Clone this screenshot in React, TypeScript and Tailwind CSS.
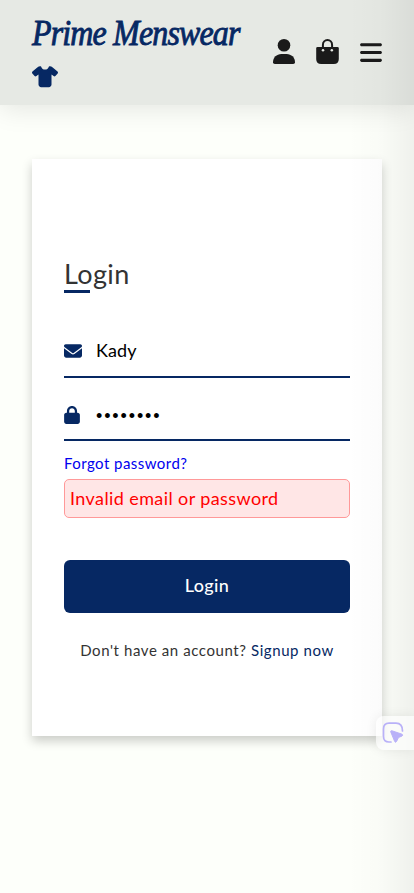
import React from "react";
import { FaBars, FaShirt, FaEnvelope, FaLock } from "react-icons/fa6";

function UserIcon() {
  return (
    <svg viewBox="0 0 22 25" className="h-[25px] w-[22px]" fill="currentColor">
      <circle cx="11" cy="6.3" r="6.3" />
      <path d="M0 23.2C0 18.6 3.7 15 8.3 15H13.7C18.3 15 22 18.6 22 23.2Q22 25 20.2 25H1.8Q0 25 0 23.2Z" />
    </svg>
  );
}

function BagIcon() {
  return (
    <svg viewBox="0 0 23 25" className="h-[25px] w-[23px]" fill="none">
      <path d="M6.9 10V5.9C6.9 3 8.9 1.1 11.5 1.1S16.1 3 16.1 5.9V10" stroke="currentColor" strokeWidth="2" />
      <path d="M1.5 8H21.5Q22.8 8 22.8 9.4V20Q22.8 25 17.8 25H5.2Q0.2 25 0.2 20V9.4Q0.2 8 1.5 8Z" fill="currentColor" />
      <circle cx="7" cy="11.3" r="1.25" fill="#e6e9e4" />
      <circle cx="15.8" cy="11.3" r="1.25" fill="#e6e9e4" />
    </svg>
  );
}

function Header() {
  return (
    <header className="flex h-[105px] items-center justify-between bg-[#e6e9e4] px-8 shadow-[0_4px_25px_rgba(0,0,0,0.1)]">
      <a className="block w-[215px] text-[#062863]">
        <span className="block h-[50px] origin-left scale-y-115 font-['Liberation_Serif',serif] text-[32px] leading-[41px] italic tracking-[-0.85px] whitespace-nowrap [-webkit-text-stroke:0.8px_#062863]">
          Prime Menswear
        </span>
        <FaShirt className="mt-[3px] mb-[4px] h-[21.5px] w-[26px]" />
      </a>
      <nav className="-mt-[2px] flex items-center gap-[21px] text-[#1a1a1a]">
        <UserIcon />
        <BagIcon />
        <FaBars className="mt-[2px] h-[25px] w-[22px]" />
      </nav>
    </header>
  );
}

function LoginCard() {
  return (
    <form className="mx-8 mt-[54px] h-[577px] bg-white px-8 pt-[97px] shadow-[0_5px_10px_rgba(0,0,0,0.2)]">
      <h1 className="h-[34px] text-[27px] leading-[36px] tracking-[0.4px] text-[#333]">Login</h1>
      <div className="h-[3px] w-[26px] bg-[#062863]" />
      <div className="mt-[33px] flex h-[52px] items-center gap-[14px] border-b-2 border-[#062863] text-[18px]">
        <FaEnvelope className="size-[18px] text-[#062863]" />
        <span className="-mt-[2px] tracking-[0.1px] text-black">Kady</span>
      </div>
      <div className="mt-[11px] flex h-[52px] items-center gap-[16px] border-b-2 border-[#062863]">
        <FaLock className="mt-[2px] h-[18px] w-4 text-[#062863]" />
        <span className="mt-[4px] font-['Liberation_Sans',sans-serif] text-[18px] tracking-[1.88px] text-black">••••••••</span>
      </div>
      <a className="mt-[11px] block h-[27px] text-[15px] leading-[22px] tracking-[0.45px] text-[#0000ee]">Forgot password?</a>
      <div className="h-[39px] rounded-[5px] border border-[#ff9999] bg-[#ffe6e6] px-[5px] text-[18px] leading-[36px] tracking-[0.4px] text-[#ff0000]">
        Invalid email or password
      </div>
      <button type="button" className="mt-[42px] block h-[53px] w-full rounded-[6px] bg-[#062863] pb-[2px] text-[18px] font-medium tracking-[0.4px] text-white">
        Login
      </button>
      <p className="mt-[25px] text-center text-[15px] leading-6 tracking-[0.58px] whitespace-nowrap text-[#333]">
        Don't have an account? <a className="text-[#062863]">Signup now</a>
      </p>
    </form>
  );
}

export default function App() {
  return (
    <div className="relative h-[893px] w-full overflow-hidden bg-[#fdfffa] font-['Lato',sans-serif]">
      <Header />
      <LoginCard />
      <div className="pointer-events-none absolute inset-y-0 right-0 w-[66px] bg-linear-to-r from-transparent via-black/[0.015] to-black/[0.055]" />
      <div className="absolute top-[716px] right-0 flex h-[34px] w-[38px] items-center rounded-l-[8px] bg-white/60 pl-[6px] shadow-[0_0_12px_rgba(0,0,0,0.07)]">
        <svg viewBox="0 0 22 22" className="size-[22px]" fill="none">
          <path d="M9 20H7Q1.5 20 1.5 14.5V7Q1.5 1.2 7 1.2H14Q20.5 1.2 20.5 9" stroke="#b9b1f8" strokeWidth="1.7" strokeLinecap="round" />
          <path d="M9.7 8.7 20 12.2Q21.5 13 20 14L16.5 15.5 14.5 19.5Q13.5 21 12.7 19.5L8.8 10Q8.5 8.6 9.7 8.7Z" fill="#b9b1f8" stroke="#b9b1f8" strokeLinejoin="round" />
        </svg>
      </div>
    </div>
  );
}
